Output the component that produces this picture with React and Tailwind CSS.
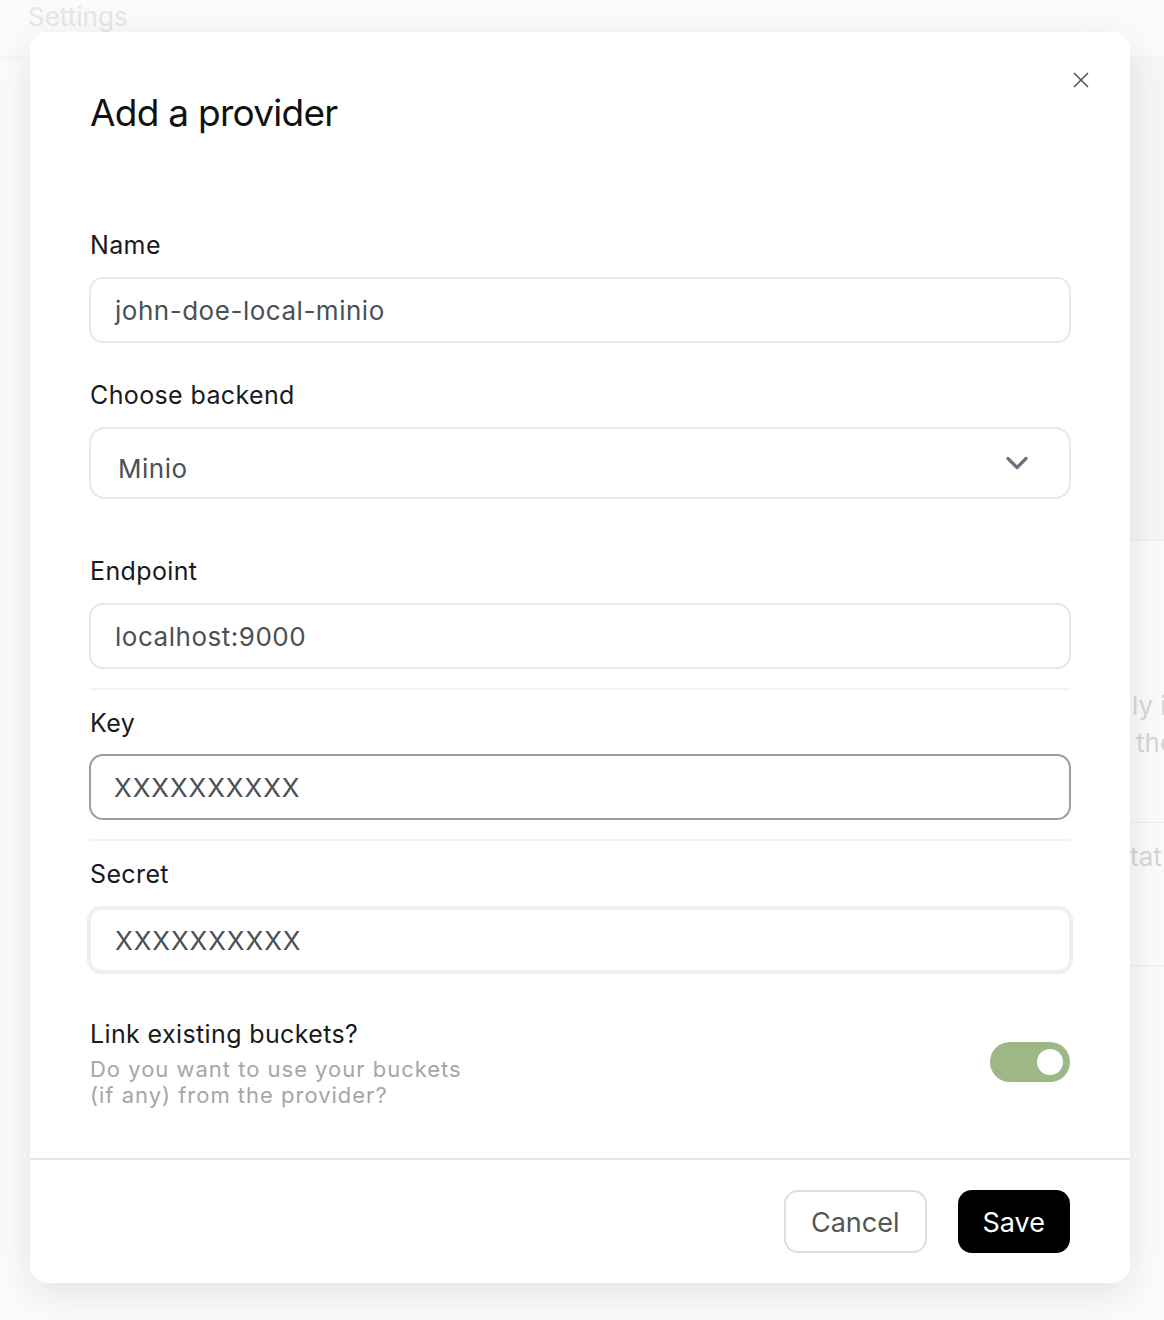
import { ChevronDown, X } from 'lucide-react'

const font = { fontFamily: 'Inter, "Noto Sans", sans-serif' }

function Field({ label, value, className = '', boxClass = '' }) {
  return (
    <div className={className}>
      <p className="text-[25px] leading-[32px] tracking-[0.015em] text-[#1a1a1a]">{label}</p>
      <div
        className={`mt-[16px] h-[66px] flex items-center pl-[24px] rounded-[14px] bg-white text-[26px] tracking-[0.02em] text-[#4b4f56] ${boxClass}`}
      >
        {value}
      </div>
    </div>
  )
}

function Backdrop() {
  return (
    <div className="min-h-[1320px] bg-[#fbfbfb]">
      <div className="h-[58px] border-b border-[#f1f1f1] pl-[28px] flex items-center">
        <span className="text-[26px] text-[#e6e6e9] -mt-[24px]">Settings</span>
      </div>
      <div className="flex justify-end">
        <div className="w-[34px] text-[26px] text-[#d6d6d6] overflow-hidden whitespace-nowrap">
          <div className="h-[482px] bg-[#f6f6f6]" />
          <div className="border-t border-[#ededed] pt-[146px] leading-[37px] h-[282px] pl-[2px]">
            <p>ly in</p>
            <p className="pl-[4px]">the</p>
          </div>
          <div className="border-t border-[#ededed] h-[143px] pt-[14px]">tat</div>
          <div className="border-t border-[#ededed]" />
        </div>
      </div>
    </div>
  )
}

export default function App() {
  return (
    <div style={font} className="relative">
      <Backdrop />
      <div className="absolute left-[30px] top-[32px] w-[1100px] h-[1251px] bg-white rounded-[18px] shadow-[0_10px_40px_rgba(0,0,0,0.10)] flex flex-col">
        <button type="button" className="absolute right-[36px] top-[35px] text-[#5f5f5f]">
          <X size={26} strokeWidth={1.6} />
        </button>
        <div className="px-[60px] pt-[59px] flex-1">
          <h1 className="text-[37px] leading-[44px] tracking-[-0.02em] text-[#111]">Add a provider</h1>

          <Field
            label="Name"
            value="john-doe-local-minio"
            className="mt-[94px]"
            boxClass="border-2 border-[#e8e8e8] -mx-px"
          />

          <div className="mt-[36px]">
            <p className="text-[25px] leading-[32px] tracking-[0.015em] text-[#1a1a1a]">Choose backend</p>
            <div className="mt-[16px] h-[72px] -mx-px flex items-center justify-between pl-[27px] pr-[34px] rounded-[16px] border-2 border-[#e8e8e8] text-[26px] tracking-[0.02em] text-[#4b4f56]">
              <span className="mt-[10px]">Minio</span>
              <ChevronDown size={36} strokeWidth={2.2} className="text-[#6b7280]" />
            </div>
          </div>

          <Field
            label="Endpoint"
            value="localhost:9000"
            className="mt-[56px]"
            boxClass="border-2 border-[#e8e8e8] -mx-px"
          />

          <div className="mt-[19px] border-t-2 border-[#f2f2f2]" />

          <Field
            label="Key"
            value="XXXXXXXXXX"
            className="mt-[17px]"
            boxClass="border-2 border-[#9e9e9e] -mx-px !mt-[15px] !pl-[23px] tracking-[0.035em]"
          />

          <div className="mt-[19px] border-t-2 border-[#f2f2f2]" />

          <Field
            label="Secret"
            value="XXXXXXXXXX"
            className="mt-[17px]"
            boxClass="border-[4px] border-[#efefef] -mx-[3px] !pl-[24px] h-[68px] tracking-[0.035em]"
          />

          <div className="mt-[44px] flex items-center justify-between">
            <div>
              <p className="text-[25px] leading-[32px] tracking-[0.015em] text-[#1a1a1a]">Link existing buckets?</p>
              <p className="mt-[6px] text-[22px] leading-[26px] tracking-[0.045em] text-[#a6a6a6]">
                Do you want to use your buckets
                <br />
                (if any) from the provider?
              </p>
            </div>
            <div className="w-[80px] h-[40px] rounded-full bg-[#9db886] flex items-center justify-end pr-[7px] -mt-[2px]">
              <div className="w-[26px] h-[26px] rounded-full bg-white" />
            </div>
          </div>
        </div>

        <div className="h-[125px] border-t-2 border-[#e6e6e6] flex items-start justify-end gap-[31px] px-[60px] pt-[30px]">
          <button
            type="button"
            className="h-[63px] px-[25px] rounded-[14px] border-2 border-[#dedede] text-[27px] text-[#555] pt-[3px]"
          >
            Cancel
          </button>
          <button
            type="button"
            className="h-[63px] px-[25px] rounded-[14px] bg-black text-[27px] text-white pt-[3px]"
          >
            Save
          </button>
        </div>
      </div>
    </div>
  )
}
